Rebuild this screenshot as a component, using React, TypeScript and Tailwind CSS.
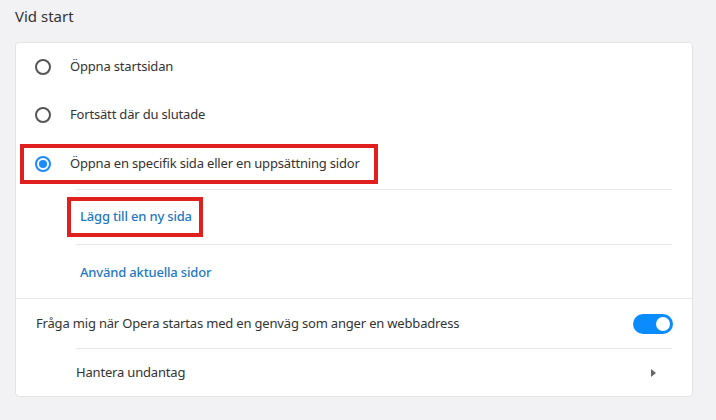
import { FC } from "react";

const Radio: FC<{ checked?: boolean }> = ({ checked }) => (
  <span
    className={
      "flex h-4 w-4 shrink-0 items-center justify-center rounded-full border-2 " +
      (checked ? "border-[#1a8cff]" : "border-[#555]")
    }
  >
    {checked && <span className="h-2 w-2 rounded-full bg-[#1a8cff]" />}
  </span>
);

const Divider: FC<{ inset?: boolean }> = ({ inset }) => (
  <div className={inset ? "ml-[60px] mr-5 h-px bg-[#e6e6e8]" : "h-px bg-[#e6e6e8]"} />
);

export default function App() {
  return (
    <div
      className="min-h-[420px] w-[716px] bg-[#f2f2f4] px-[15px] text-[13px] tracking-[-0.18px] text-[#333]"
      style={{ fontFamily: '"Noto Sans", "Open Sans", sans-serif' }}
    >
      <div className="flex h-[42px] items-start pt-[5px] text-[15px] tracking-normal text-[#333]">Vid start</div>
      <div className="w-[678px] rounded-[4px] border border-[#e3e3e6] bg-white">
        <div className="flex h-[48px] items-center gap-[19px] pl-[19px]">
          <Radio />
          <span>Öppna startsidan</span>
        </div>
        <div className="flex h-[47px] items-center gap-[19px] pl-[19px]">
          <Radio />
          <span>Fortsätt där du slutade</span>
        </div>
        <div className="flex h-[51px] items-center pl-[8px]">
          <div className="inline-flex h-8 items-center gap-[19px] pl-[11px] pr-[14px] outline-4 outline-[#e0201f]">
            <Radio checked />
            <span>Öppna en specifik sida eller en uppsättning sidor</span>
          </div>
        </div>
        <Divider inset />
        <div className="flex h-[54px] items-center pl-[55px]">
          <div className="inline-flex h-8 items-center pl-[9px] pr-[7px] font-medium text-[#1f78c1] outline-4 outline-[#e0201f]">
            Lägg till en ny sida
          </div>
        </div>
        <Divider inset />
        <div className="flex h-[53px] items-center pl-[64px] pt-[2px] font-medium text-[#1f78c1]">
          Använd aktuella sidor
        </div>
        <Divider />
        <div className="flex h-[49px] items-center justify-between pl-5 pr-[19px]">
          <span>Fråga mig när Opera startas med en genväg som anger en webbadress</span>
          <span className="flex h-5 w-10 items-center justify-end rounded-full bg-[#0a8cff] pr-[3px]">
            <span className="h-[14px] w-[14px] rounded-full bg-white" />
          </span>
        </div>
        <Divider inset />
        <div className="flex h-[47px] items-center justify-between pl-[60px] pr-9">
          <span>Hantera undantag</span>
          <svg width="5" height="8" viewBox="0 0 5 8">
            <path d="M0 0 L5 4 L0 8 Z" fill="#666" />
          </svg>
        </div>
      </div>
    </div>
  );
}
